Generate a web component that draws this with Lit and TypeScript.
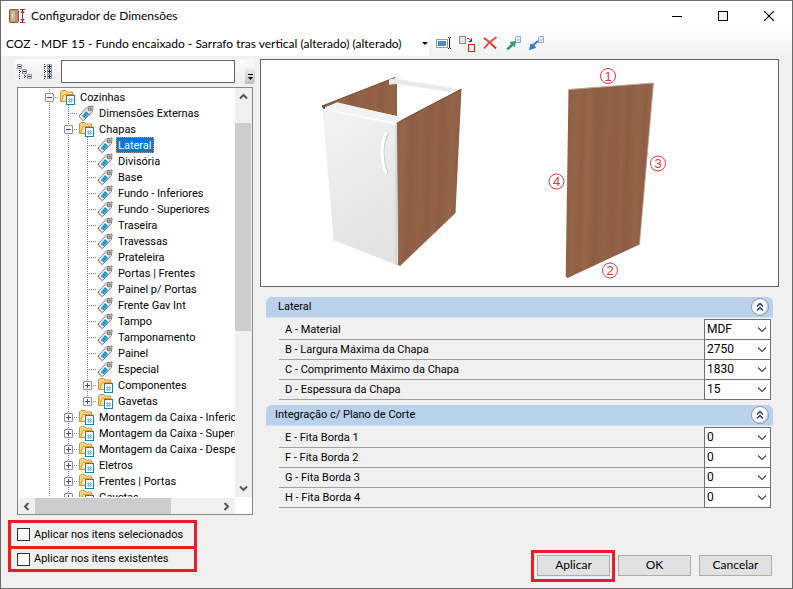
import { LitElement, html, svg, css, nothing } from "lit";
import { customElement, state } from "lit/decorators.js";
import { classMap } from "lit/directives/class-map.js";
import { styleMap } from "lit/directives/style-map.js";

type Guide = "line" | "tee" | "end" | "none";

interface TreeNode {
  label: string;
  guides: Guide[];
  kind: "folder" | "tag";
  toggle?: "open" | "closed";
}

const leaf = (label: string): TreeNode => ({ label, kind: "tag", guides: ["line", "line", "tee"] });
const group = (label: string): TreeNode => ({ label, kind: "folder", toggle: "closed", guides: ["line", "tee"] });

const NODES: TreeNode[] = [
  { label: "Cozinhas", kind: "folder", toggle: "open", guides: ["tee"] },
  { label: "Dimensões Externas", kind: "tag", guides: ["line", "tee"] },
  { label: "Chapas", kind: "folder", toggle: "open", guides: ["line", "tee"] },
  ...[
    "Lateral", "Divisória", "Base", "Fundo - Inferiores", "Fundo - Superiores", "Traseira",
    "Travessas", "Prateleira", "Portas | Frentes", "Painel p/ Portas", "Frente Gav Int",
    "Tampo", "Tamponamento", "Painel", "Especial",
  ].map(leaf),
  { label: "Componentes", kind: "folder", toggle: "closed", guides: ["line", "line", "tee"] },
  { label: "Gavetas", kind: "folder", toggle: "closed", guides: ["line", "line", "end"] },
  group("Montagem da Caixa - Inferiores"),
  group("Montagem da Caixa - Superiores"),
  group("Montagem da Caixa - Despensa"),
  group("Eletros"),
  group("Frentes | Portas"),
  group("Gavetas"),
];

interface Field {
  label: string;
  value: string;
}

interface Section {
  title: string;
  inset: boolean;
  fields: Field[];
}

const SECTIONS: Section[] = [
  {
    title: "Lateral",
    inset: true,
    fields: [
      { label: "A - Material", value: "MDF" },
      { label: "B - Largura Máxima da Chapa", value: "2750" },
      { label: "C - Comprimento Máximo da Chapa", value: "1830" },
      { label: "D - Espessura da Chapa", value: "15" },
    ],
  },
  {
    title: "Integração c/ Plano de Corte",
    inset: false,
    fields: [
      { label: "E - Fita Borda 1", value: "0" },
      { label: "F - Fita Borda 2", value: "0" },
      { label: "G - Fita Borda 3", value: "0" },
      { label: "H - Fita Borda 4", value: "0" },
    ],
  },
];

const icon = (body: unknown, w = 16, h = 16) =>
  html`<svg width=${w} height=${h} viewBox="0 0 ${w} ${h}" aria-hidden="true">${body}</svg>`;

const folderIcon = icon(svg`
  <path d="M1.500 12.500V3L3 1.500H6.500L8 3H13.500V6H5L2.500 12.500Z" fill="#f9d687" stroke="#cf9436"/>
  <path d="M2.500 12.500L5 5.500H14.500V12.500Z" fill="#ffe6a3" stroke="#d79b3c"/>
  <rect x="7.500" y="6.500" width="8" height="9" fill="#fff" stroke="#1583bd"/>
  <path d="M9 10.500H14M9 12.500H14M10.500 9V14M12.500 9V14" stroke="#8dbcdc"/>`);

const tagIcon = icon(svg`
  <path d="M1 11L9.800 1.600L15 1L14.500 6.200L6 15.200L4.400 15.200Z" fill="#fbfbfb" stroke="#747474"/>
  <path d="M9.600 2.600L14.300 1.700L13.900 6L12.400 7.800L8 4.400Z" fill="#cfcfcf"/>
  <path d="M3.800 11.200L8 6L11 8.800L7 13.400Z" fill="#1f8fd0"/>
  <path d="M5.200 9.600L8.200 12.200M6.600 7.800L9.800 10.600" stroke="#6fbdea" stroke-width=".7"/>
  <rect x="10.700" y="3" width="2.200" height="2.200" fill="#fff" stroke="#666"/>`);

const chevron = icon(svg`<path d="M1 1.500L5 5.500L9 1.500" fill="none" stroke="#444" stroke-width="1.200"/>`, 10, 7);

const arrow = (d: string) => icon(svg`<path d=${d} fill="none" stroke="#555" stroke-width="2"/>`, 9, 9);

const cabinetPicture = html`
  <svg class="scene" viewBox="261 60 517 226" preserveAspectRatio="xMinYMid meet" role="img" aria-label="Lateral">
    <defs>
      <linearGradient id="grain" x1="0" x2="62" y1="0" y2="2" gradientUnits="userSpaceOnUse" spreadMethod="repeat">
        <stop offset="0" stop-color="#8f5f45"/>
        <stop offset=".1" stop-color="#946348"/>
        <stop offset=".18" stop-color="#8d5d43"/>
        <stop offset=".34" stop-color="#956549"/>
        <stop offset=".46" stop-color="#905f45"/>
        <stop offset=".55" stop-color="#97674a"/>
        <stop offset=".7" stop-color="#8c5c43"/>
        <stop offset=".84" stop-color="#936347"/>
        <stop offset="1" stop-color="#8f5f45"/>
      </linearGradient>
      <linearGradient id="door" x1="0" y1="0" x2=".3" y2="1">
        <stop offset="0" stop-color="#f3f3f4"/>
        <stop offset="1" stop-color="#e3e3e4"/>
      </linearGradient>
    </defs>
    <path d="M322 106L395 77.500L397 79V116L337 103L323 108Z" fill="url(#grain)"/>
    <path d="M322 106L395 77.500" stroke="#7a4a33" stroke-width="1"/>
    <path d="M389 79.500L395 78.300L457 88.600L451.500 92L396 84L389 84.800Z" fill="#e9e9ea"/>
    <path d="M395 78.600L457 88.900" stroke="#f7f7f7" stroke-width="1"/>
    <path d="M396.500 123L461.500 89L455.500 213L400 266L398 265Z" fill="url(#grain)"/>
    <path d="M396.500 123L461.500 89" stroke="#74452f" stroke-width="1"/>
    <path d="M323 108.500L337 102.300L404 118L396.700 123Z" fill="#f2f2f3"/>
    <path d="M322 106L325 105V109H323Z" fill="#7a4a33"/>
    <path d="M322.500 109L397 125L398 265.500L333.500 240Z" fill="url(#door)"/>
    <path d="M396 124.500V265" stroke="#c9c9ca" stroke-width="1"/>
    <path d="M322.500 109L397 125" stroke="#fafafa" stroke-width="1"/>
    <path d="M388 133C382 143 381 158 387 173" fill="none" stroke="#c9c9cb" stroke-width="3"/>
    <path d="M386.500 132.500C381 143 380.500 160 386 173" fill="none" stroke="#fff" stroke-width="3"/>
    <path d="M568.500 89.500L653.500 83L639.500 244.500L567.500 278L565.700 276.500Z" fill="url(#grain)"/>
    <path d="M568.500 89.500L653.500 83" stroke="#b9a79c" stroke-width="1"/>
    <path d="M653.500 83L639.500 244.500" stroke="#b9a79c" stroke-width=".7"/>
    <g class="marks">
      <circle cx="608" cy="76" r="7.500"/><text x="608" y="80.500">1</text>
      <circle cx="610" cy="270.500" r="7.500"/><text x="610" y="275">2</text>
      <circle cx="658" cy="163.500" r="7.500"/><text x="658" y="168">3</text>
      <circle cx="556.500" cy="181.500" r="7.500"/><text x="556.500" y="186">4</text>
    </g>
  </svg>`;

const TOOLS: { name: string; art: unknown }[] = [
  {
    name: "Renomear",
    art: svg`<rect x=".5" y="3.500" width="11" height="8" fill="#fff" stroke="#8f9bb8"/>
      <rect x="2" y="5" width="8" height="5" fill="#4f86e0"/>
      <path d="M12 1.500H13M14 1.500H15M12 12.500H13M14 12.500H15M13.500 2V12" stroke="#222"/>`,
  },
  {
    name: "Substituir",
    art: svg`<rect x=".5" y=".5" width="6" height="7" fill="#e8e4e4" stroke="#8d8484"/>
      <path d="M8 2.500H10L12.500 5.500M12.500 2.500V6M12.500 5.500H9.500" fill="none" stroke="#27407e"/>
      <rect x="9.500" y="8.500" width="6" height="7" fill="#f6e9e9" stroke="#e8201c"/>`,
  },
  {
    name: "Excluir",
    art: svg`<path d="M2 2C6 4.500 10 8.500 14 12.500" fill="none" stroke="#e2322c" stroke-width="2"/>
      <path d="M14.500 1C9 4.500 5 8.500 2 12.500" fill="none" stroke="#ee4a40" stroke-width="2"/>`,
  },
  {
    name: "Exportar",
    art: svg`<path d="M11.500 .5H15.500V6.500H10.500V1.500Z" fill="#e4eef8" stroke="#8fb0d2"/>
      <path d="M12 3.500H14.500M12 5H14.500" stroke="#8fb0d2" stroke-width=".6"/>
      <path d="M1.200 12.500L6 8L4.500 6L11 4.800L10 11.300L8 9.800L3.500 14.200Z" fill="#2f9e7a"/>`,
  },
  {
    name: "Importar",
    art: svg`<path d="M11.500 .5H15.500V6.500H10.500V1.500Z" fill="#e4eef8" stroke="#8fb0d2"/>
      <path d="M12 3.500H14.500M12 5H14.500" stroke="#8fb0d2" stroke-width=".6"/>
      <path d="M11 5L6.500 9.500L8.200 11.800L1 14.300L2.500 7.500L4.300 8.500L9 4.500Z" fill="#3b7cc9"/>`,
  },
];

@customElement("app-root")
export class AppRoot extends LitElement {
  @state() private selected = "Lateral";

  static styles = css`
    :host {
      --ui: Roboto, "Liberation Sans", sans-serif;
      --title: Lato, "Noto Sans", sans-serif;
      --mark: #ed1c24;
      display: flex;
      flex-direction: column;
      box-sizing: border-box;
      height: 100vh;
      border: 1px solid #6b6b6b;
      background: #f0f0f0;
      color: #000;
      font: 11px/16px var(--ui);
    }
    * { box-sizing: border-box; }
    svg { display: block; flex: none; }
    button, select, input { margin: 0; font: inherit; color: inherit; }
    button { padding: 0; border: 0; background: none; }
    select { appearance: none; border: 0; border-radius: 0; background: #fff; }

    .titlebar {
      display: flex;
      align-items: center;
      height: 30px;
      padding-left: 7px;
      background: #fff;
      font: 12px/16px var(--title);
    }
    .titlebar h1 { margin: 0 auto 0 5px; font: inherit; }
    .caption { display: grid; place-items: center; width: 46px; height: 30px; }

    .toolbar {
      display: flex;
      align-items: center;
      gap: 7px;
      height: 27px;
      padding: 0 0 2px 1px;
      background: linear-gradient(#fdfdfd, #f0f0f0);
    }
    .combo { display: grid; align-items: center; }
    .combo > * { grid-area: 1 / 1; }
    .combo svg { justify-self: end; pointer-events: none; }
    .model { width: 427px; height: 25px; padding: 0 4px; font: 12px/16px var(--title); }
    .toolbar .combo svg { margin-right: 1px; }

    .main {
      display: flex;
      flex: 1;
      gap: 5px;
      min-height: 0;
      padding: 1px 13px 0;
    }
    .side { display: flex; flex-direction: column; width: 241px; }
    .search {
      display: flex;
      align-items: center;
      height: 25px;
      padding-left: 3px;
      border-radius: 4px;
      background: linear-gradient(#fbfbfb, #eeeeee);
    }
    .search input {
      width: 174px;
      height: 23px;
      margin: 0 10px 0 auto;
      padding: 0 4px;
      border: 1px solid #646464;
      background: #fff;
    }
    .search button:nth-of-type(2) { margin-left: 10px; }
    .more {
      display: grid;
      place-items: end center;
      align-self: stretch;
      width: 10px;
      padding-bottom: 3px;
      border-radius: 0 4px 4px 0;
      background: linear-gradient(#f6f6f6 30%, #bdbdbd);
    }
    .tree {
      display: grid;
      grid-template: minmax(0, 1fr) 17px / minmax(0, 1fr) 17px;
      flex: 1;
      min-height: 0;
      margin: 3px 2px 0 3px;
      border: 1px solid #828790;
      background: #fff;
    }
    .rows { overflow: hidden; margin: 0; padding: 1px 0 0 22px; list-style: none; }
    .row { display: flex; align-items: center; height: 16px; white-space: nowrap; }
    .guide {
      flex: none;
      display: grid;
      place-items: center;
      width: 19px;
      height: 16px;
      background-repeat: no-repeat;
      --v: repeating-linear-gradient(#808080 0 1px, transparent 1px 2px);
      --h: repeating-linear-gradient(90deg, #808080 0 1px, transparent 1px 2px);
    }
    .guide.line { background-image: var(--v); background-size: 1px 16px; background-position: 9px 0; }
    .guide.tee { background-image: var(--v), var(--h); background-size: 1px 16px, 10px 1px; background-position: 9px 0, 9px 8px; }
    .guide.end { background-image: var(--v), var(--h); background-size: 1px 8px, 10px 1px; background-position: 9px 0, 9px 8px; }
    .toggle {
      display: grid;
      place-items: center;
      width: 9px;
      height: 9px;
      border: 1px solid #919191;
      border-radius: 1px;
      background: #fbfbfb;
    }
    .name { margin-left: 3px; padding: 0 2px; height: 16px; line-height: 18px; }
    .name.on { background: #0078d7; color: #fff; outline: 1px dotted #e08a3a; outline-offset: -1px; }
    .vbar, .hbar { display: flex; background: #f0f0f0; }
    .vbar { flex-direction: column; }
    .hbar { margin-top: 1px; }
    .step { display: grid; place-items: center; flex: none; width: 17px; height: 17px; }
    .thumb { background: #cdcdcd; }
    .vbar .thumb { margin-right: 1px; }

    .detail { display: flex; flex: 1; flex-direction: column; min-width: 0; }
    .picture { border: 1px solid #646464; background: #fff; }
    .scene { width: 100%; height: auto; }
    .marks circle { fill: #fff; stroke: #e0343a; stroke-width: 1px; }
    .marks text { fill: #e0343a; font: 13px "Liberation Sans", sans-serif; text-anchor: middle; }

    .section { margin: 6px 6px 0 6px; }
    .picture + .section { margin-top: 10px; }
    .head {
      display: flex;
      align-items: center;
      justify-content: space-between;
      height: 21px;
      padding: 0 4px 0 9px;
      border-bottom: 1px solid #d3e1f0;
      border-radius: 6px 6px 0 0;
      background: #b9d1ea;
    }
    .head h2 { margin: 0; font: inherit; line-height: 18px; }
    .head.inset h2 { margin-left: 3px; }
    .fold {
      display: grid;
      place-items: center;
      width: 18px;
      height: 18px;
      border: 1px solid #8c97ae;
      border-radius: 50%;
      background: #fff;
      box-shadow: inset -1px -1px 1px #c6cedb;
    }
    .fields { margin: 1px 2px 0 13px; }
    .field {
      display: grid;
      grid-template-columns: minmax(0, 1fr) 67px;
      height: 20px;
    }
    .field > label { height: 21px; padding-left: 6px; border-bottom: 1px solid #a0a0a0; line-height: 22px; }
    .field .combo { height: 21px; border: 1px solid #707070; background: #fff; }
    .field select { width: 100%; height: 19px; padding: 0 2px 1px; font: 12px/16px var(--ui); }
    .field .combo svg { margin-right: 3px; }

    .footer {
      display: flex;
      align-items: flex-start;
      height: 73px;
      padding: 5px 14px 0 7px;
    }
    .checks { width: 189px; border: 3px solid var(--mark); white-space: nowrap; }
    .checks label { display: flex; align-items: center; gap: 4px; height: 23px; padding-left: 6px; }
    .checks label + label { height: 23px; border-top: 3px solid var(--mark); }
    .checks input { appearance: none; width: 13px; height: 13px; border: 1px solid #333; background: #fff; }
    .actions { display: flex; align-items: flex-start; gap: 8px; margin: 30px 6px 0 auto; }
    .push { width: 73px; height: 21px; padding-bottom: 1px; border: 1px solid #adadad; background: #e1e1e1; font: 12px/16px var(--title); }
    .actions > .push { margin-top: 5px; }
    .marked { margin-right: -5px; padding: 2px 2px 3px 3px; border: 3px solid var(--mark); }
    .marked .push { display: block; }
  `;

  private renderNode(node: TreeNode) {
    const last = node.guides.length - 1;
    const on = node.label === this.selected;
    return html`<li class="row" role="treeitem" aria-selected=${on} @click=${() => (this.selected = node.label)}>
      ${node.guides.map((g, i) => html`<span class="guide ${g}">${i === last && node.toggle
        ? html`<button class="toggle" aria-label=${node.label}>${icon(
            svg`<path d=${node.toggle === "open" ? "M1 3.500H6" : "M1 3.500H6M3.500 1V6"} stroke="#37528f"/>`, 7, 7)}</button>`
        : nothing}</span>`)}
      ${node.kind === "folder" ? folderIcon : tagIcon}
      <span class=${classMap({ name: true, on })}>${node.label}</span>
    </li>`;
  }

  private renderSection(section: Section, index: number) {
    return html`<section class="section">
      <header class=${classMap({ head: true, inset: section.inset })}>
        <h2>${section.title}</h2>
        <button class="fold" aria-label="Recolher ${section.title}">
          ${icon(svg`<path d="M2 4.500L5 1.500L8 4.500M2 8.500L5 5.500L8 8.500" fill="none" stroke="#1f3a78" stroke-width="1.500"/>`, 10, 10)}
        </button>
      </header>
      <div class="fields">
        ${section.fields.map((f, i) => html`<div class="field">
          <label for="f${index}-${i}">${f.label}</label>
          <div class="combo">
            <select id="f${index}-${i}"><option>${f.value}</option></select>
            ${chevron}
          </div>
        </div>`)}
      </div>
    </section>`;
  }

  render() {
    const part = (n: number) => styleMap({ flex: `${n} 1 0` });
    return html`
      <header class="titlebar">
        ${icon(svg`
          <rect x="1.500" y="1.500" width="9" height="13" rx="1" fill="#b9946a" stroke="#7d6246"/>
          <path d="M3 3H7V13H3Z" fill="#d3b58f"/>
          <path d="M4.500 6V9" stroke="#fff"/>
          <path d="M12 1.500H17M12 14.500H17M14.500 2V14" stroke="#d8142a"/>
          <path d="M12.500 5L14.500 2L16.500 5ZM12.500 11L14.500 14L16.500 11Z" fill="#d8142a"/>`, 18, 16)}
        <h1>Configurador de Dimensões</h1>
        <button class="caption" aria-label="Minimizar">${icon(svg`<path d="M0 5.500H10" stroke="#000"/>`, 10, 10)}</button>
        <button class="caption" aria-label="Maximizar">${icon(svg`<rect x=".5" y=".5" width="9" height="9" fill="none" stroke="#000"/>`, 10, 10)}</button>
        <button class="caption" aria-label="Fechar">${icon(svg`<path d="M0 0L10 10M10 0L0 10" stroke="#000" stroke-width="1.200"/>`, 10, 10)}</button>
      </header>

      <div class="toolbar" role="toolbar">
        <div class="combo">
          <select class="model" aria-label="Modelo">
            <option>COZ - MDF 15 - Fundo encaixado - Sarrafo tras vertical (alterado) (alterado)</option>
          </select>
          ${icon(svg`<path d="M0 1H6L3 4Z" fill="#000"/>`, 6, 5)}
        </div>
        ${TOOLS.map((t) => html`<button aria-label=${t.name}>${icon(t.art)}</button>`)}
      </div>

      <main class="main">
        <div class="side">
          <div class="search">
            <button aria-label="Recolher tudo">${icon(svg`
              <path d="M2.500 6V15M7.500 11V15M3 7.500H6M8 12.500H11" stroke="#222" stroke-dasharray="1 1"/>
              <path d="M.5 .5H4.500V4.500H.5ZM5.500 5.500H9.500V9.500H5.500ZM10.500 10.500H14.500V14.500H10.500Z" fill="#eef1f6" stroke="#8794a8"/>
              <path d="M1 2.500H4M6 7.500H9M11 12.500H14" stroke="#333"/>`)}</button>
            <button aria-label="Expandir tudo">${icon(svg`
              <path d="M1.500 0V16M2 2.500H4M2 7.500H4M2 12.500H4" stroke="#222" stroke-dasharray="1 1"/>
              <path d="M4.500 .5H8.500V4.500H4.500ZM4.500 5.500H8.500V9.500H4.500ZM4.500 10.500H8.500V14.500H4.500Z" fill="#e6eaf0" stroke="#8794a8"/>
              <path d="M5 2.500H8M6.500 1V4M5 7.500H8M6.500 6V9M5 12.500H8M6.500 11V14" stroke="#222"/>`, 10, 16)}</button>
            <input type="text" aria-label="Pesquisar" />
            <button class="more" aria-label="Mais opções">${icon(svg`<path d="M1 .5H6" stroke="#000"/><path d="M1 3H6L3.500 6Z" fill="#000"/>`, 7, 7)}</button>
          </div>
          <div class="tree">
            <ul class="rows" role="tree">${NODES.map((n) => this.renderNode(n))}</ul>
            <div class="vbar">
              <button class="step" aria-label="Subir">${arrow("M1 6.500L4.500 3L8 6.500")}</button>
              <span style=${part(18)}></span>
              <span class="thumb" style=${part(207)}></span>
              <span style=${part(149)}></span>
              <button class="step" aria-label="Descer">${arrow("M1 2.500L4.500 6L8 2.500")}</button>
            </div>
            <div class="hbar">
              <button class="step" aria-label="Esquerda">${arrow("M6.500 1L3 4.500L6.500 8")}</button>
              <span class="thumb" style=${part(135)}></span>
              <span style=${part(46)}></span>
              <button class="step" aria-label="Direita">${arrow("M2.500 1L6 4.500L2.500 8")}</button>
            </div>
          </div>
        </div>

        <div class="detail">
          <div class="picture">${cabinetPicture}</div>
          ${SECTIONS.map((s, i) => this.renderSection(s, i))}
        </div>
      </main>

      <footer class="footer">
        <div class="checks">
          <label><input type="checkbox" />Aplicar nos itens selecionados</label>
          <label><input type="checkbox" />Aplicar nos itens existentes</label>
        </div>
        <div class="actions">
          <div class="marked"><button class="push">Aplicar</button></div>
          <button class="push">OK</button>
          <button class="push">Cancelar</button>
        </div>
      </footer>
    `;
  }
}
